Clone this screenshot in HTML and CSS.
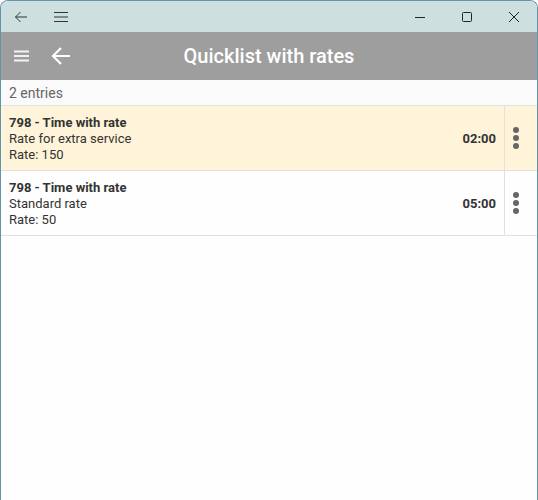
FILE: index.html
```html
<!DOCTYPE html>
<html>
<head>
<meta charset="utf-8">
<link rel="stylesheet" href="styles.css">
</head>
<body>
<div class="window">
  <div class="titlebar">
    <div class="tb-left">
      <svg class="tb-icon" width="16" height="16" viewBox="0 0 16 16"><path d="M14 8H2.5M7.5 3L2.5 8l5 5" fill="none" stroke="#333" stroke-width="1"/></svg>
      <svg class="tb-icon" width="16" height="16" viewBox="0 0 16 16"><path d="M1 3.5h14M1 8h14M1 12.5h14" fill="none" stroke="#333" stroke-width="1"/></svg>
    </div>
    <div class="tb-right">
      <svg class="tb-btn" width="12" height="12" viewBox="0 0 12 12"><path d="M1 6.5h10" stroke="#222" stroke-width="1"/></svg>
      <svg class="tb-btn" width="12" height="12" viewBox="0 0 12 12"><rect x="1.5" y="1.5" width="9" height="9" rx="1" fill="none" stroke="#222" stroke-width="1"/></svg>
      <svg class="tb-btn" width="12" height="12" viewBox="0 0 12 12"><path d="M1 1l10 10M11 1L1 11" stroke="#222" stroke-width="1"/></svg>
    </div>
  </div>
  <div class="appbar">
    <svg class="ab-menu" width="16" height="12" viewBox="0 0 16 12"><path d="M0 1.5h15M0 6h15M0 10.5h15" stroke="#f2f2f2" stroke-width="1.8"/></svg>
    <svg class="ab-back" width="20" height="20" viewBox="0 0 20 20"><path d="M19 10H3M10 2L2 10l8 8" fill="none" stroke="#fff" stroke-width="2.2"/></svg>
    <div class="ab-title">Quicklist with rates</div>
  </div>
  <div class="count">2 entries</div>
  <div class="list">
    <div class="item selected">
      <div class="item-main">
        <div class="item-text">
          <div class="item-title">798 - Time with rate</div>
          <div>Rate for extra service</div>
          <div>Rate: 150</div>
        </div>
        <div class="item-time">02:00</div>
      </div>
      <div class="item-more"><span class="dot"></span><span class="dot"></span><span class="dot"></span></div>
    </div>
    <div class="item">
      <div class="item-main">
        <div class="item-text">
          <div class="item-title">798 - Time with rate</div>
          <div>Standard rate</div>
          <div>Rate: 50</div>
        </div>
        <div class="item-time">05:00</div>
      </div>
      <div class="item-more"><span class="dot"></span><span class="dot"></span><span class="dot"></span></div>
    </div>
  </div>
</div>
</body>
</html>
```
FILE: styles.css
```css
html, body {
  margin: 0;
  padding: 0;
  background: #fefefe;
}
body {
  font-family: Roboto, "Liberation Sans", sans-serif;
}
.window {
  height: 500px;
  box-sizing: border-box;
  border-left: 1px solid #6395aa;
  border-right: 1px solid #6395aa;
  border-top: 1px solid #6395aa;
  border-radius: 8px 8px 0 0;
  overflow: hidden;
  background: #fefefe;
}
.titlebar {
  height: 31px;
  background: #cde0df;
  display: flex;
  align-items: center;
  justify-content: space-between;
}
.tb-left {
  display: flex;
  align-items: center;
  gap: 24px;
  padding-left: 12px;
}
.tb-right {
  display: flex;
  align-items: center;
  gap: 35px;
  padding-right: 17px;
}
.tb-icon, .tb-btn { display: block; }
.appbar {
  height: 48px;
  background: #9e9e9e;
  display: flex;
  align-items: center;
  position: relative;
}
.ab-menu {
  display: block;
  margin-left: 13px;
}
.ab-back {
  display: block;
  margin-left: 21px;
}
.ab-title {
  position: absolute;
  left: 0;
  right: 0;
  text-align: center;
  color: #fff;
  font-size: 20px;
  font-weight: 500;
  pointer-events: none;
}
.count {
  height: 26px;
  box-sizing: border-box;
  background: #fafafa;
  border-bottom: 1px solid #e2e2e2;
  color: #666;
  font-size: 14px;
  line-height: 26px;
  padding-left: 8px;
}
.item {
  display: flex;
  height: 65px;
  box-sizing: border-box;
  border-bottom: 1px solid #e0e0e0;
  color: #333;
  font-size: 13px;
}
.item.selected {
  background: #fff3d9;
}
.item-main {
  flex: 1;
  display: flex;
  align-items: center;
  padding: 1px 8px 0;
}
.item-text {
  flex: 1;
  line-height: 16px;
}
.item-title {
  font-weight: 700;
}
.item-time {
  font-weight: 700;
  font-size: 13px;
}
.item-more {
  width: 33px;
  box-sizing: border-box;
  padding-right: 11px;
  border-left: 1px solid #e4e0d8;
  display: flex;
  flex-direction: column;
  align-items: center;
  justify-content: center;
  gap: 2px;
}
.dot {
  width: 6px;
  height: 6px;
  border-radius: 50%;
  background: #666;
}
```
